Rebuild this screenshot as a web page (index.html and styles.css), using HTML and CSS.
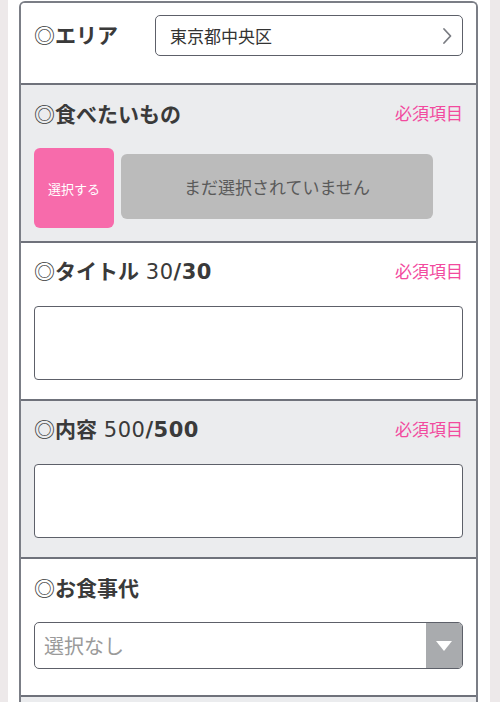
FILE: index.html
```html
<!DOCTYPE html>
<html lang="ja">
<head>
<meta charset="utf-8">
<link rel="stylesheet" href="styles.css">
</head>
<body>
<div class="page">
  <div class="card">
    <section class="sec sec-area">
      <h2 class="label"><span class="mark">◎</span>エリア</h2>
      <div class="area-select">
        <span>東京都中央区</span>
        <svg class="chev" width="10" height="18" viewBox="0 0 10 18"><path d="M2 2 L8.5 9 L2 16" fill="none" stroke="#7a7c82" stroke-width="1.8" stroke-linecap="round" stroke-linejoin="round"/></svg>
      </div>
    </section>
    <section class="sec gray sec-pick">
      <div class="head">
        <h2 class="label"><span class="mark">◎</span>食べたいもの</h2>
        <span class="req">必須項目</span>
      </div>
      <div class="pick">
        <button class="pick-btn">選択する</button>
        <div class="pick-empty">まだ選択されていません</div>
      </div>
    </section>
    <section class="sec">
      <div class="head">
        <h2 class="label"><span class="mark">◎</span>タイトル <span class="cnt"><span class="num">30</span>/30</span></h2>
        <span class="req">必須項目</span>
      </div>
      <div class="textbox"></div>
    </section>
    <section class="sec gray">
      <div class="head">
        <h2 class="label"><span class="mark">◎</span>内容 <span class="cnt"><span class="num">500</span>/500</span></h2>
        <span class="req">必須項目</span>
      </div>
      <div class="textbox"></div>
    </section>
    <section class="sec sec-price">
      <div class="head">
        <h2 class="label"><span class="mark">◎</span>お食事代</h2>
      </div>
      <div class="dropdown">
        <span class="placeholder">選択なし</span>
        <span class="arrow"><svg width="18" height="12" viewBox="0 0 18 12"><path d="M1 1 H17 L9 11 Z" fill="#fff"/></svg></span>
      </div>
    </section>
    <section class="sec gray tail"></section>
  </div>
</div>
</body>
</html>
```
FILE: styles.css
```css
* { box-sizing: border-box; }
html, body { margin: 0; padding: 0; }
body {
  background: #ede9ea;
  font-family: "Noto Sans CJK JP", "Noto Sans", sans-serif;
  color: #3a3a3a;
  height: 702px;
  overflow: hidden;
}
.page {
  margin: 0 10px 0 8px;
  background: #fff;
  padding: 1px 12px 0 11px;
  min-height: 702px;
}
.card {
  border: 2px solid #7b7e86;
  border-bottom: none;
  border-radius: 6px 6px 0 0;
  overflow: hidden;
}
.sec {
  padding: 14px 13px 19px;
  border-top: 2px solid #6f727b;
  background: #fff;
}
.sec:first-child { border-top: none; }
.gray { background: #ebecee; }
.sec-area {
  display: flex;
  align-items: center;
  padding: 12px 13px 27px;
}
.sec-area .label { width: 121px; margin-bottom: 4px; }
.label {
  margin: 0;
  font-size: 21px;
  font-weight: 700;
  line-height: 28px;
  color: #3a3a3a;
  white-space: nowrap;
}
.mark { font-weight: 400; }
.cnt {
  font-family: "DejaVu Sans", sans-serif;
  font-size: 21px;
  letter-spacing: 0.5px;
  margin-left: 2px;
}
.num { font-weight: 400; }
.head {
  display: flex;
  justify-content: space-between;
  align-items: center;
  height: 28px;
}
.req {
  color: #f24a9e;
  font-size: 17px;
  line-height: 28px;
}
.area-select {
  flex: 1;
  height: 41px;
  border: 1px solid #5d6069;
  border-radius: 5px;
  display: flex;
  align-items: center;
  justify-content: space-between;
  padding: 0 10px 0 14px;
  font-size: 17px;
  color: #333;
}
.sec-pick { padding-bottom: 13px; }
.pick {
  margin-top: 21px;
  display: flex;
  align-items: center;
  gap: 7px;
}
.pick-btn {
  width: 80px;
  height: 80px;
  border: none;
  border-radius: 6px;
  background: #f76bab;
  color: #fff;
  font-family: inherit;
  font-size: 13px;
  padding: 0;
}
.pick-empty {
  width: 312px;
  height: 65px;
  margin-top: -3px;
  border-radius: 6px;
  background: #bbbbbb;
  color: #5a5a5a;
  font-size: 17px;
  display: flex;
  align-items: center;
  justify-content: center;
}
.textbox {
  margin-top: 21px;
  height: 74px;
  border: 1px solid #5d6069;
  border-radius: 4px;
  background: #fff;
}
.sec-price { padding-bottom: 26px; }
.dropdown {
  margin-top: 21px;
  height: 47px;
  border: 1px solid #5d6069;
  border-radius: 5px;
  background: #fff;
  display: flex;
  align-items: stretch;
  overflow: hidden;
}
.placeholder {
  flex: 1;
  padding-left: 9px;
  font-size: 20px;
  color: #9a9a9a;
  display: flex;
  align-items: center;
}
.arrow {
  width: 36px;
  background: #a9abae;
  display: flex;
  align-items: center;
  justify-content: center;
}
.tail { height: 40px; padding: 0; }
```
